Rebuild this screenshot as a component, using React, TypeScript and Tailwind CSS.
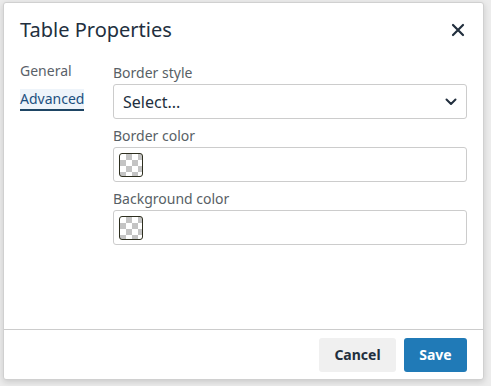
const font = "font-['Segoe_UI','Noto_Sans','Liberation_Sans',sans-serif]";

function Swatch() {
  return (
    <div
      className="h-6 w-6 rounded-[3px] border border-[#2e2f1f] bg-white"
      style={{
        backgroundImage:
          "linear-gradient(45deg,#c4c4c4 25%,transparent 25%,transparent 75%,#c4c4c4 75%),linear-gradient(45deg,#c4c4c4 25%,transparent 25%,transparent 75%,#c4c4c4 75%)",
        backgroundSize: "12px 12px",
        backgroundPosition: "0 0,6px 6px",
      }}
    />
  );
}

function ColorField({ label }: { label: string }) {
  return (
    <div className="flex flex-col">
      <label className="mb-[3px] h-[17px] text-[14px] leading-[17px] text-[#585f66]">{label}</label>
      <div className="flex h-[35px] items-center rounded-[3px] border border-[#cccccc] bg-white px-[5px]">
        <Swatch />
      </div>
    </div>
  );
}

export default function App() {
  return (
    <div className={`h-[386px] w-[491px] overflow-hidden bg-[#ececec] pl-[3px] pt-[2px] ${font}`}>
      <div className="flex h-[378px] w-[481px] flex-col rounded-[3px] border border-[#d0d0d0] bg-white shadow-[0_2px_6px_rgba(0,0,0,0.15)]">
        <div className="flex h-[54px] items-center justify-between pl-[16px] pr-[18px]">
          <h1 className="text-[20px] leading-[24px] text-[#222f3e]">Table Properties</h1>
          <svg width="14" height="14" viewBox="0 0 14 14" className="text-[#222f3e]">
            <path d="M2 2 L12 12 M12 2 L2 12" stroke="currentColor" strokeWidth="2.2" strokeLinecap="round" />
          </svg>
        </div>
        <div className="flex flex-1 pl-[16px] pr-[16px] pt-[7px]">
          <div className="-mt-[3px] flex w-[93px] flex-col items-start">
            <div className="h-[20px] text-[14px] leading-[20px] text-[#5a6169]">General</div>
            <div className="mt-[8px] border-b-[2px] border-[#1e4564] bg-[#eef4fa] text-[14px] leading-[20px] text-[#1c5080]">
              Advanced
            </div>
          </div>
          <div className="flex flex-1 flex-col gap-[8px]">
            <div className="flex flex-col">
              <label className="mb-[3px] h-[17px] text-[14px] leading-[17px] text-[#585f66]">Border style</label>
              <div className="flex h-[35px] items-center justify-between rounded-[3px] border border-[#cccccc] bg-white pl-[9px] pr-[9px]">
                <span className="text-[16px] text-[#222f3e]">Select...</span>
                <svg width="12" height="8" viewBox="0 0 12 8">
                  <path d="M1.5 1.5 L6 6 L10.5 1.5" fill="none" stroke="#222f3e" strokeWidth="2" strokeLinecap="round" strokeLinejoin="round" />
                </svg>
              </div>
            </div>
            <ColorField label="Border color" />
            <ColorField label="Background color" />
          </div>
        </div>
        <div className="flex h-[50px] items-center justify-end gap-[8px] border-t border-[#cccccc] pr-[16px]">
          <button className="h-[34px] w-[77px] rounded-[3px] bg-[#f0f0f0] text-[14px] font-bold text-[#222f3e]">Cancel</button>
          <button className="h-[34px] w-[63px] rounded-[3px] bg-[#207ab7] text-[14px] font-bold text-white">Save</button>
        </div>
      </div>
    </div>
  );
}
